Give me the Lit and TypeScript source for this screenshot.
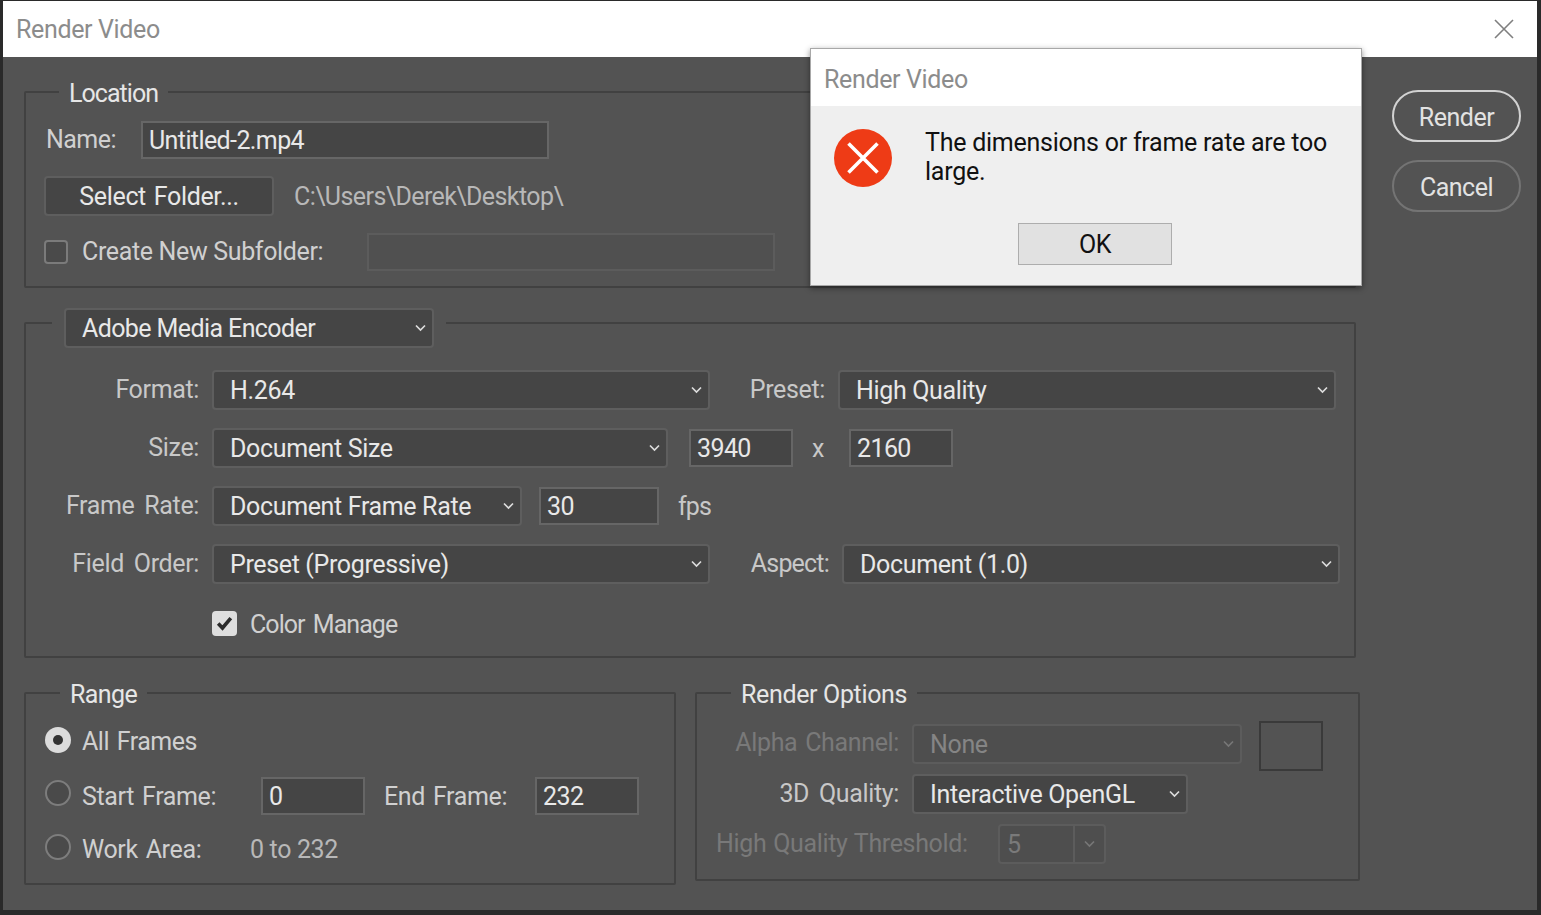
import { LitElement, html, css } from "lit";
import { customElement } from "lit/decorators.js";

const chev = html`<svg class="chev" width="11" height="8" viewBox="0 0 11 8"><path d="M1 1.5 5.5 6 10 1.5" fill="none" stroke="currentColor" stroke-width="1.7"/></svg>`;

@customElement("app-root")
export class AppRoot extends LitElement {
  static styles = css`
    :host { display: block; width: 1541px; height: 915px; overflow: hidden; }
    * { box-sizing: border-box; }
    .window { position: relative; width: 1541px; height: 915px; background: #2a2a2a; padding: 1px 4px 5px 3px; display: flex; flex-direction: column;
      font-family: Roboto, sans-serif; font-size: 25px; letter-spacing: -0.35px; color: #d4d4d4; }
    .title { height: 56px; background: #fff; display: flex; align-items: center; justify-content: space-between; padding: 0 23px 0 13px; color: #8c8c8c; flex: none; }
    .body { flex: 1; background: #535353; display: flex; padding-left: 21px; }
    .col { width: 1340px; flex: none; display: flex; flex-direction: column; }
    .side { margin-left: 28px; padding-top: 33px; display: flex; flex-direction: column; gap: 18px; }
    .pill { width: 129px; height: 52px; border-radius: 26px; border: 2px solid #d2d2d2; padding-top: 2px; display: flex; align-items: center; justify-content: center; color: #e2e2e2; letter-spacing: -0.5px; }
    .pill.off { border-color: #747474; }
    fieldset { margin: 20px 0 0; padding: 0; border: 2px solid #414141; border-radius: 2px; min-width: 0; }
    legend { padding: 0 10px; height: 30px; line-height: 34px; color: #e6e6e6; white-space: nowrap; }
    .loc { width: 1332px; height: 211px; }
    .loc legend { margin-left: 33px; letter-spacing: -0.95px; }
    .enc { width: 1332px; height: 350px; }
    .enc legend { margin-left: 26px; padding: 0 12px; line-height: normal; }
    .enc legend .sel { margin: 0; letter-spacing: -0.6px; }
    .bottom { display: flex; gap: 19px; }
    .range { width: 652px; height: 207px; }
    .range legend { margin-left: 34px; letter-spacing: -0.6px; }
    .opts { width: 665px; height: 203px; }
    .opts legend { margin-left: 34px; }
    .row { display: flex; align-items: center; }
    .lbl { text-align: right; flex: none; margin-right: 13px; color: #c8c8c8; white-space: nowrap; word-spacing: 4px; padding-bottom: 2px; }
    .sel { flex: none; height: 40px; background: #454545; border: 2px solid #5e5e5e; border-radius: 4px; padding: 0 6px 0 16px; display: flex; align-items: center; justify-content: space-between; color: #e8e8e8; white-space: nowrap; }
    .chev { color: #dcdcdc; flex: none; }
    .sel.dis { background: #4e4e4e; border-color: #5c5c5c; color: #858585; }
    .sel.dis .chev { color: #777; }
    .inp { flex: none; height: 38px; background: #454545; border: 2px solid #666; padding: 0 6px; display: flex; align-items: center; color: #e8e8e8; white-space: nowrap; letter-spacing: -0.6px; }
    .check { flex: none; width: 24px; height: 24px; border-radius: 4px; background: #4a4a4a; border: 2px solid #7b7b7b; }
    .check.on { width: 25px; height: 25px; background: #dedede; border: none; color: #2b2b2b; display: flex; align-items: center; justify-content: center; }
    .radio { flex: none; width: 26px; height: 26px; border-radius: 50%; border: 2px solid #7d7d7d; background: #4a4a4a; margin-right: 11px; }
    .radio.on { background: #dcdcdc; border: none; display: flex; align-items: center; justify-content: center; }
    .radio.on::after { content: ""; width: 10px; height: 10px; border-radius: 50%; background: #333; }
    .txt { color: #d0d0d0; white-space: nowrap; word-spacing: 2px; }
    .dim { color: #797979; word-spacing: 1px; }

    /* Location */
    .l1 { margin: 14px 0 0 20px; }
    .l1 .txt { width: 95px; padding-bottom: 2px; letter-spacing: -0.55px; }
    .w-name { width: 408px; }
    .l2 { margin: 17px 0 0 18px; }
    .btn { flex: none; width: 230px; height: 40px; background: #454545; border: 2px solid #5e5e5e; border-radius: 4px; display: flex; align-items: center; justify-content: center; color: #e8e8e8; margin-right: 20px; word-spacing: 2px; }
    .path { color: #b8b8b8; white-space: nowrap; }
    .l2 .path { letter-spacing: -0.58px; }
    .l3 { margin: 17px 0 0 18px; }
    .l3 .check { margin-right: 14px; }
    .l3 .txt { width: 285px; padding-bottom: 1px; word-spacing: 0; }
    .sub { width: 408px; background: #505050; border-color: #5c5c5c; }

    /* Encoder */
    .w173 { width: 173px; } .w115 { width: 115px; } .w119 { width: 119px; letter-spacing: -0.8px; }
    .s498 { width: 498px; } .s456 { width: 456px; } .s310 { width: 310px; } .s370 { width: 370px; }
    .e1 { margin-top: 32px; }
    .e2, .e3, .e4 { margin-top: 18px; }
    .i104 { width: 104px; } .i120 { width: 120px; }
    .ml21 { margin-left: 21px; } .ml17 { margin-left: 17px; }
    .x { width: 56px; text-align: center; color: #c8c8c8; margin-left: -3px; }
    .x + .inp { margin-left: 3px; }
    .fps { margin-left: 19px; color: #c8c8c8; letter-spacing: -0.9px; }
    .e5 { margin: 24px 0 0 186px; }
    .e5 .check { margin-right: 13px; }
    .e5 .txt { letter-spacing: -0.95px; padding-top: 2px; word-spacing: 3px; }

    /* Range */
    .r1 { margin: 19px 0 0 19px; height: 26px; }
    .r1 .txt { padding-top: 2px; letter-spacing: -0.5px; }
    .r2 { margin: 24px 0 0 19px; height: 38px; }
    .r2 .radio { margin-bottom: 6px; }
    .r3 { margin: 19px 0 0 19px; height: 26px; }
    .r3 .txt, .r3 .path { padding-top: 4px; }
    .r2 .a { width: 179px; }
    .r2 .b { width: 151px; margin-left: 19px; }
    .r3 .a { width: 168px; }

    /* Options */
    .o1 { margin-top: 16px; height: 40px; align-items: flex-start; }
    .o2 { margin-top: 10px; height: 40px; }
    .o1 .lbl, .o2 .lbl { line-height: 38px; padding-bottom: 0; }
    .o1 .lbl { word-spacing: 2px; }
    .w202 { width: 202px; }
    .s330 { width: 330px; } .s276 { width: 276px; }
    .swatch { width: 64px; height: 50px; border: 2px solid #3a3a3a; margin: -3px 0 0 17px; flex: none; }
    .o3 { margin: 10px 0 0 19px; }
    .o3 .dim { width: 282px; padding-bottom: 2px; }
    .combo { flex: none; width: 108px; height: 40px; display: flex; background: #4e4e4e; border: 2px solid #5c5c5c; border-radius: 4px; color: #7a7a7a; align-items: center; }
    .combo .v { width: 75px; height: 100%; padding-left: 7px; border-right: 2px solid #5c5c5c; display: flex; align-items: center; }
    .combo .chev { margin-left: 9px; color: #777; }

    /* Alert */
    .alert { position: absolute; left: 810px; top: 48px; width: 552px; height: 238px; background: #efefef; border: 1px solid #a8a8a8; box-shadow: 0 2px 6px rgba(0,0,0,.45); color: #111; display: flex; flex-direction: column; }
    .a-title { height: 57px; background: #fff; flex: none; display: flex; align-items: center; padding: 3px 0 0 13px; color: #8c8c8c; }
    .a-body { display: flex; padding: 23px 24px 0 23px; }
    .a-icon { flex: none; margin-right: 33px; }
    .a-msg { line-height: 29px; margin-top: -1px; color: #111; letter-spacing: -0.25px; }
    .a-foot { display: flex; justify-content: center; margin-top: 36px; padding-left: 18px; }
    .ok { width: 154px; height: 42px; background: #e1e1e1; border: 1px solid #adadad; display: flex; align-items: center; justify-content: center; color: #111; }
  `;

  render() {
    return html`<div class="window">
      <div class="title"><span>Render Video</span>
        <svg width="20" height="20" viewBox="0 0 20 20"><path d="M1 1 19 19M19 1 1 19" stroke="#7f7f7f" stroke-width="1.6" fill="none"/></svg>
      </div>
      <div class="body">
        <div class="col">
          <fieldset class="loc">
            <legend>Location</legend>
            <div class="row l1"><span class="txt">Name:</span><div class="inp w-name">Untitled-2.mp4</div></div>
            <div class="row l2"><div class="btn">Select Folder...</div><span class="path">C:\\Users\\Derek\\Desktop\\</span></div>
            <div class="row l3"><div class="check"></div><span class="txt">Create New Subfolder:</span><div class="inp sub"></div></div>
          </fieldset>
          <fieldset class="enc">
            <legend><div class="sel s370">Adobe Media Encoder ${chev}</div></legend>
            <div class="row e1"><span class="lbl w173">Format:</span><div class="sel s498">H.264 ${chev}</div><span class="lbl w115">Preset:</span><div class="sel s498">High Quality ${chev}</div></div>
            <div class="row e2"><span class="lbl w173">Size:</span><div class="sel s456">Document Size ${chev}</div><div class="inp i104 ml21">3940</div><span class="x">x</span><div class="inp i104">2160</div></div>
            <div class="row e3"><span class="lbl w173">Frame Rate:</span><div class="sel s310">Document Frame Rate ${chev}</div><div class="inp i120 ml17">30</div><span class="fps">fps</span></div>
            <div class="row e4"><span class="lbl w173">Field Order:</span><div class="sel s498">Preset (Progressive) ${chev}</div><span class="lbl w119">Aspect:</span><div class="sel s498">Document (1.0) ${chev}</div></div>
            <div class="row e5"><div class="check on"><svg width="17" height="15" viewBox="0 0 17 15"><path d="M2.2 7.5 6.5 12 14.8 2.2" fill="none" stroke="currentColor" stroke-width="3.6"/></svg></div><span class="txt">Color Manage</span></div>
          </fieldset>
          <div class="bottom">
            <fieldset class="range">
              <legend>Range</legend>
              <div class="row r1"><div class="radio on"></div><span class="txt">All Frames</span></div>
              <div class="row r2"><div class="radio"></div><span class="txt a">Start Frame:</span><div class="inp i104">0</div><span class="txt b">End Frame:</span><div class="inp i104">232</div></div>
              <div class="row r3"><div class="radio"></div><span class="txt a">Work Area:</span><span class="path">0 to 232</span></div>
            </fieldset>
            <fieldset class="opts">
              <legend>Render Options</legend>
              <div class="row o1"><span class="lbl w202 dim">Alpha Channel:</span><div class="sel s330 dis">None ${chev}</div><div class="swatch"></div></div>
              <div class="row o2"><span class="lbl w202">3D Quality:</span><div class="sel s276">Interactive OpenGL ${chev}</div></div>
              <div class="row o3"><span class="dim">High Quality Threshold:</span><div class="combo"><div class="v">5</div>${chev}</div></div>
            </fieldset>
          </div>
        </div>
        <div class="side"><div class="pill">Render</div><div class="pill off">Cancel</div></div>
      </div>
      <div class="alert">
        <div class="a-title">Render Video</div>
        <div class="a-body">
          <svg class="a-icon" width="58" height="58" viewBox="0 0 58 58"><circle cx="29" cy="29" r="29" fill="#ee3b16"/><path d="M14.5 14.5 43.5 43.5M43.5 14.5 14.5 43.5" stroke="#fff" stroke-width="3.6" fill="none"/></svg>
          <div class="a-msg">The dimensions or frame rate are too large.</div>
        </div>
        <div class="a-foot"><div class="ok">OK</div></div>
      </div>
    </div>`;
  }
}
